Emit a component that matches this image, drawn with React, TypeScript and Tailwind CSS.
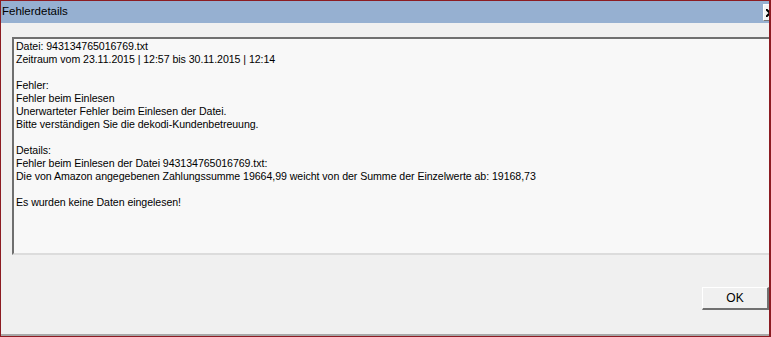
import React from "react";

const lines: string[] = [
  "Datei: 943134765016769.txt",
  "Zeitraum vom 23.11.2015 | 12:57 bis 30.11.2015 | 12:14",
  "",
  "Fehler:",
  "Fehler beim Einlesen",
  "Unerwarteter Fehler beim Einlesen der Datei.",
  "Bitte verständigen Sie die dekodi-Kundenbetreuung.",
  "",
  "Details:",
  "Fehler beim Einlesen der Datei 943134765016769.txt:",
  "Die von Amazon angegebenen Zahlungssumme 19664,99 weicht von der Summe der Einzelwerte ab: 19168,73",
  "",
  "Es wurden keine Daten eingelesen!",
];

export default function App() {
  return (
    <div
      className="w-[771px] h-[337px] overflow-hidden bg-[#f0f0f0] border-t border-l border-r-2 border-b border-[#8c1c22] flex flex-col"
      style={{ fontFamily: '"Liberation Sans", Arial, sans-serif' }}
    >
      <div className="relative h-[22px] shrink-0 bg-[#96b0d1] flex items-center pl-[1px] text-[11.5px] text-black">
        <span>Fehlerdetails</span>
        <div className="absolute right-[-8px] top-[3px] w-[14px] h-[17px] bg-[#f4f4f4] border-t border-l border-white border-r border-b border-r-[#777] border-b-[#777] flex items-center justify-start pl-[2px]">
          <svg width="8" height="8" viewBox="0 0 8 8">
            <path d="M0 0 L8 8 M8 0 L0 8" stroke="#000" strokeWidth="2" />
          </svg>
        </div>
      </div>
      <div className="flex-1 flex flex-col pt-[14px] pl-[11px]">
        <div className="h-[218px] bg-[#f8f8f8] border-t-2 border-l-2 border-t-[#6f6f6f] border-l-[#6f6f6f] border-b-2 border-b-[#dcdcdc] pl-[2px] pt-[1px] text-[10.6px] tracking-[-0.05px] leading-[13px] text-black">
          {lines.map((l, i) => (
            <div key={i} className="h-[13px] whitespace-pre">
              {l}
            </div>
          ))}
        </div>
        <div className="flex justify-end pt-[32px] pr-0">
          <div className="w-[67px] h-[23px] bg-[#f0f0f0] border-t border-l border-white border-r-2 border-b-2 border-r-[#707070] border-b-[#707070] flex items-center justify-center text-[12px] text-black">
            OK
          </div>
        </div>
      </div>
      <div className="h-[2px] bg-[#a8a8a8] shrink-0" />
    </div>
  );
}
